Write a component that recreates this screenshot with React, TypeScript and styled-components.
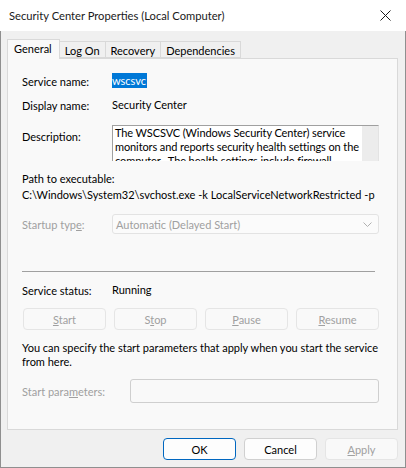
import React from 'react';
import styled, { createGlobalStyle } from 'styled-components';

const GlobalStyle = createGlobalStyle`
    html, body {
        margin: 0;
        padding: 0;
        background: #ffffff;
    }
    body {
        font-family: Lato, "Liberation Sans", sans-serif;
        font-size: 11px;
        color: #000000;
    }
`;

const Window = styled.div`
    width: 406px;
    height: 468px;
    display: flex;
    flex-direction: column;
    box-sizing: border-box;
`;

const TitleBar = styled.div`
    height: 31px;
    flex-shrink: 0;
    background: #ffffff;
    display: flex;
    align-items: center;
    justify-content: space-between;
    padding: 0 15px 0 9px;
    font-size: 11.2px;
    color: #1a1a1a;
`;

const Body = styled.div`
    flex: 1;
    background: #f0f0f0;
    border: 1px solid #8f8f8f;
    border-top: none;
    padding: 8px 7px 7px 6px;
    display: flex;
    flex-direction: column;
`;

const Tabs = styled.div`
    display: flex;
    align-items: flex-end;
    height: 19px;
    padding-left: 1px;
`;

const Tab = styled.div<{ $active?: boolean }>`
    box-sizing: border-box;
    height: ${({ $active }) => ($active ? '20px' : '17px')};
    margin-bottom: ${({ $active }) => ($active ? '-1px' : '0')};
    background: ${({ $active }) => ($active ? '#f9f9f9' : '#f0f0f0')};
    border: 1px solid #d9d9d9;
    border-bottom: ${({ $active }) => ($active ? 'none' : '1px solid #d9d9d9')};
    margin-left: -1px;
    padding: ${({ $active }) => ($active ? '2px 7px 0 6px' : '1px 5px 0 5px')};
    display: flex;
    align-items: ${({ $active }) => ($active ? 'flex-start' : 'center')};
    position: relative;
    z-index: ${({ $active }) => ($active ? 1 : 0)};
    white-space: nowrap;
`;

const Panel = styled.div`
    height: 372px;
    box-sizing: border-box;
    background: #f9f9f9;
    border: 1px solid #d9d9d9;
    padding: 0 17px 0 14px;
    display: flex;
    flex-direction: column;
`;

const Row = styled.div<{ $mt: number; $h?: number; $label?: number }>`
    margin-top: ${({ $mt }) => $mt}px;
    display: grid;
    grid-template-columns: ${({ $label }) => $label ?? 90}px 1fr;
    align-items: center;
    justify-items: start;
    height: ${({ $h }) => ($h ? `${$h}px` : '16px')};
    white-space: nowrap;
`;

const Line = styled.div<{ $mt: number }>`
    margin-top: ${({ $mt }) => $mt}px;
    height: 16px;
    line-height: 16px;
    white-space: nowrap;
`;

const Label = styled.div<{ $disabled?: boolean; $top?: number }>`
    color: ${({ $disabled }) => ($disabled ? '#a0a0a0' : '#000000')};
    padding-top: ${({ $top }) => $top ?? 0}px;
`;

const Value = styled.div`
    line-height: 16px;
`;

const Selected = styled.span`
    background: #0078d7;
    color: #ffffff;
    padding: 1px 1px 1px 0;
`;

const DescRow = styled.div<{ $mt: number }>`
    margin-top: ${({ $mt }) => $mt}px;
    display: grid;
    grid-template-columns: 90px 1fr;
    align-items: start;
    height: 36px;
`;

const DescBox = styled.div`
    width: 267px;
    height: 36px;
    box-sizing: border-box;
    background: #ffffff;
    border-top: 1px solid #a0a0a0;
    border-left: 1px solid #a0a0a0;
    border-right: 1px solid #e3e3e3;
    display: flex;
    overflow: hidden;
`;

const DescText = styled.div`
    flex: 1;
    padding: 0 0 0 2px;
    line-height: 14px;
    letter-spacing: -0.1px;
    overflow: hidden;
`;

const ScrollTrack = styled.div`
    width: 16px;
    background: #ececec;
    flex-shrink: 0;
`;

const Combo = styled.div`
    width: 267px;
    height: 20px;
    box-sizing: border-box;
    border: 1px solid #e3e3e3;
    border-radius: 3px;
    background: #fbfbfb;
    color: #a0a0a0;
    display: flex;
    align-items: center;
    justify-content: space-between;
    padding: 0 6px 0 3px;
`;

const Separator = styled.div<{ $mt: number }>`
    margin-top: ${({ $mt }) => $mt}px;
    height: 1px;
    width: 353px;
    background: #a0a0a0;
`;

const ButtonRow = styled.div<{ $mt: number }>`
    margin-top: ${({ $mt }) => $mt}px;
    display: grid;
    grid-template-columns: repeat(4, 83px);
    gap: 8px;
    padding-left: 1px;
`;

const Button = styled.button<{ $primary?: boolean; $w?: number }>`
    width: ${({ $w }) => ($w ? `${$w}px` : 'auto')};
    height: 22px;
    box-sizing: border-box;
    font: inherit;
    font-size: 11px;
    padding: 0;
    border-radius: 4px;
    background: #fdfdfd;
    border: 1px solid ${({ $primary }) => ($primary ? '#0067c0' : '#d0d0d0')};
    color: #000000;
    &:disabled {
        background: #f9f9f9;
        border-color: #e5e5e5;
        color: #a0a0a0;
    }
`;

const Info = styled.div<{ $mt: number }>`
    margin-top: ${({ $mt }) => $mt}px;
    line-height: 14px;
    width: 370px;
`;

const Input = styled.div`
    width: 249px;
    height: 24px;
    box-sizing: border-box;
    border: 1px solid #cfcfcf;
    border-radius: 3px;
    background: #f9f9f9;
`;

const Footer = styled.div`
    margin-top: 8px;
    display: flex;
    justify-content: flex-end;
    gap: 8px;
`;

const u = (s: string) => <u>{s}</u>;

function CloseIcon() {
    return (
        <svg width="11" height="11" viewBox="0 0 11 11">
            <path d="M0.5 0.5 L10.5 10.5 M10.5 0.5 L0.5 10.5" stroke="#1a1a1a" strokeWidth="1" />
        </svg>
    );
}

function Chevron() {
    return (
        <svg width="9" height="5" viewBox="0 0 9 5">
            <path d="M0.5 0.5 L4.5 4.5 L8.5 0.5" fill="none" stroke="#b0b0b0" strokeWidth="1" />
        </svg>
    );
}

export default function App() {
    return (
        <>
            <GlobalStyle />
            <Window>
                <TitleBar>
                    <span>Security Center Properties (Local Computer)</span>
                    <CloseIcon />
                </TitleBar>
                <Body>
                    <Tabs>
                        <Tab $active>General</Tab>
                        <Tab>Log On</Tab>
                        <Tab>Recovery</Tab>
                        <Tab>Dependencies</Tab>
                    </Tabs>
                    <Panel>
                        <Row $mt={14}>
                            <Label>Service name:</Label>
                            <Value>
                                <Selected>wscsvc</Selected>
                            </Value>
                        </Row>
                        <Row $mt={8}>
                            <Label>Display name:</Label>
                            <Value>Security Center</Value>
                        </Row>
                        <DescRow $mt={12}>
                            <Label $top={5}>Description:</Label>
                            <DescBox>
                                <DescText>
                                    The WSCSVC (Windows Security Center) service monitors and reports security health
                                    settings on the computer.&nbsp; The health settings include firewall (on/off),
                                    antivirus (on/off/out of date)
                                </DescText>
                                <ScrollTrack />
                            </DescBox>
                        </DescRow>
                        <Line $mt={10}>Path to executable:</Line>
                        <Line $mt={0}>C:\Windows\System32\svchost.exe -k LocalServiceNetworkRestricted -p</Line>
                        <Row $mt={11} $h={20}>
                            <Label $disabled>Startup typ{u('e')}:</Label>
                            <Combo>
                                <span>Automatic (Delayed Start)</span>
                                <Chevron />
                            </Combo>
                        </Row>
                        <Separator $mt={37} />
                        <Row $mt={10}>
                            <Label>Service status:</Label>
                            <Value>Running</Value>
                        </Row>
                        <ButtonRow $mt={10}>
                            <Button disabled>{u('S')}tart</Button>
                            <Button disabled>S{u('t')}op</Button>
                            <Button disabled>{u('P')}ause</Button>
                            <Button disabled>{u('R')}esume</Button>
                        </ButtonRow>
                        <Info $mt={11}>
                            You can specify the start parameters that apply when you start the service from here.
                        </Info>
                        <Row $mt={10} $h={24} $label={108}>
                            <Label $disabled>Start para{u('m')}eters:</Label>
                            <Input />
                        </Row>
                    </Panel>
                    <Footer>
                        <Button $primary $w={73}>OK</Button>
                        <Button $w={73}>Cancel</Button>
                        <Button disabled $w={73}>
                            {u('A')}pply
                        </Button>
                    </Footer>
                </Body>
            </Window>
        </>
    );
}
